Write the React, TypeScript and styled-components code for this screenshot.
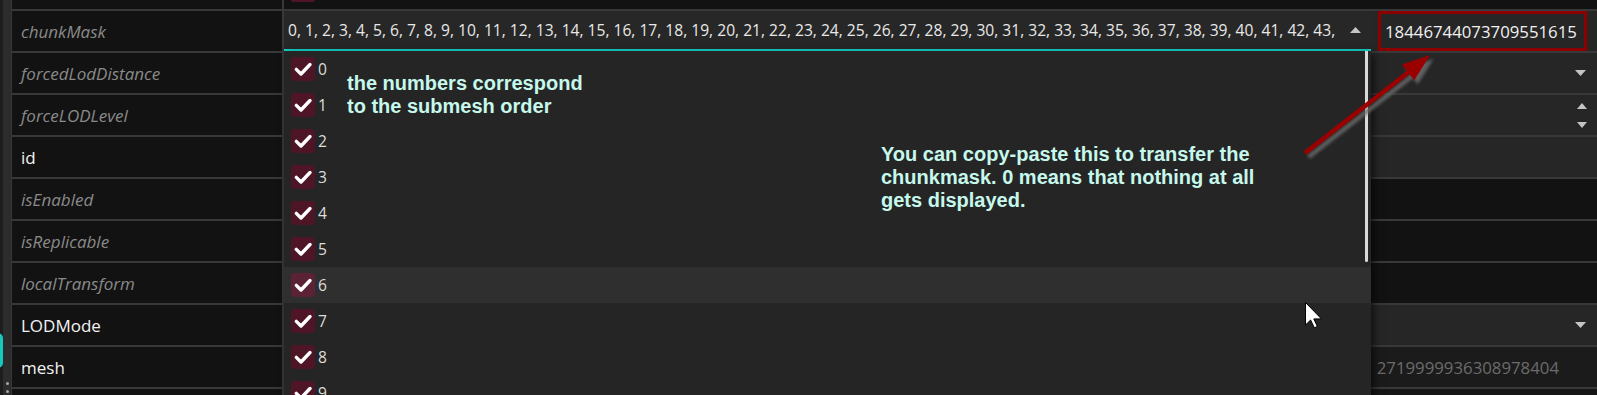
import React from "react";
import styled, { createGlobalStyle } from "styled-components";

const GlobalStyle = createGlobalStyle`
  *, *::before, *::after { box-sizing: border-box; }
  html, body { margin: 0; padding: 0; background: #121212; overflow: hidden; }
  body { font-family: "Open Sans", "Noto Sans", sans-serif; }
`;

const Page = styled.div`
  position: relative;
  display: flex;
  width: 1597px;
  height: 395px;
  overflow: hidden;
  background: #121212;
`;

const SideStrip = styled.div`
  flex: none;
  width: 12px;
  height: 100%;
  background: #2c2c2c;
  border-left: 3px solid #1d1d1d;
  border-right: 1px solid #363636;
  display: flex;
  flex-direction: column;
  justify-content: flex-end;
  align-items: flex-start;
  padding-bottom: 2px;
`;

const TabHandle = styled.div`
  flex: none;
  width: 20px;
  height: 35px;
  margin-left: -20px;
  margin-bottom: 14px;
  border: 3px solid #17c9bd;
  border-radius: 5px;
`;

const Dots = styled.div`
  display: flex;
  flex-direction: column;
  gap: 5px;
  margin-left: 3px;
`;

const Dot = styled.span`
  width: 3px;
  height: 3px;
  border-radius: 50%;
  background: #a6a6a6;
`;

const Table = styled.div`
  flex: 1;
  display: flex;
  flex-direction: column;
  gap: 2px;
  background: #383838;
`;

const Row = styled.div<{ $h: number }>`
  flex: none;
  height: ${(p) => p.$h}px;
  display: grid;
  grid-template-columns: 270px 1fr;
  column-gap: 2px;
`;

const Label = styled.div<{ $dim?: boolean }>`
  background: #121212;
  display: flex;
  align-items: center;
  padding-left: 9px;
  font-size: 17px;
  font-style: ${(p) => (p.$dim ? "italic" : "normal")};
  color: ${(p) => (p.$dim ? "#8a8a8a" : "#f2f2f2")};
  white-space: nowrap;
`;

const ValueCell = styled.div<{ $bg: string }>`
  background: ${(p) => p.$bg};
  display: flex;
  align-items: center;
  justify-content: flex-end;
  padding-right: 11px;
  overflow: hidden;
`;

const TopStub = styled.div`
  background: #121212;
  display: flex;
  align-items: flex-start;
  padding-left: 7px;
`;

const StubCheck = styled.span`
  width: 24px;
  height: 2px;
  background: #4e1527;
  border-radius: 0 0 3px 3px;
`;

const Spinner = styled.div`
  display: flex;
  flex-direction: column;
  justify-content: space-between;
  height: 25px;
  margin-right: -1px;
`;

const MeshHash = styled.span`
  font-size: 16.8px;
  color: #6b6b6b;
  padding-right: 27px;
`;

const MaskValue = styled.div`
  display: flex;
  background: #262626;
`;

const DropdownField = styled.div`
  position: relative;
  flex: none;
  width: 1087px;
  background: #272727;
  border-bottom: 2px solid #14d0c3;
  display: flex;
  align-items: center;
  padding: 0 10px 0 4px;
  gap: 8px;
`;

const FieldText = styled.div`
  flex: 1;
  overflow: hidden;
  white-space: nowrap;
  font-size: 15.6px;
  color: #e8e8e8;
`;

const Popup = styled.div`
  position: absolute;
  top: calc(100% + 2px);
  left: 0;
  width: 100%;
  height: 380px;
  background: #252525;
  box-shadow: 3px 3px 8px rgba(0, 0, 0, 0.6);
  overflow: hidden;
  z-index: 2;
`;

const ScrollThumb = styled.div`
  position: absolute;
  top: 0;
  right: 3px;
  width: 3px;
  height: 211px;
  background: #d9d9d9;
  border-radius: 0 0 1.5px 1.5px;
`;

const ItemRow = styled.div<{ $hover?: boolean }>`
  height: 36px;
  display: flex;
  align-items: center;
  gap: 3px;
  padding-left: 7px;
  background: ${(p) => (p.$hover ? "#2f2f2f" : "transparent")};
`;

const CheckBox = styled.span<{ $hover?: boolean }>`
  width: 24px;
  height: 24px;
  border-radius: 4px;
  background: ${(p) => (p.$hover ? "#5b2235" : "#4e1527")};
  display: grid;
  place-items: center;
`;

const ItemLabel = styled.span`
  font-size: 15.6px;
  color: #dcdcdc;
`;

const NumberField = styled.div`
  flex: 1;
  display: flex;
  padding: 0 10px 0 7px;
  background: #262626;
`;

const RedBox = styled.div`
  flex: 1;
  display: flex;
  align-items: center;
  padding-left: 4px;
  border: 3px solid #8e0000;
  font-size: 16.8px;
  color: #f0f0f0;
  white-space: nowrap;
`;

const Annotation = styled.div<{ $x: number; $y: number }>`
  position: absolute;
  left: ${(p) => p.$x}px;
  top: ${(p) => p.$y}px;
  font-family: "Liberation Sans", Arial, sans-serif;
  font-weight: bold;
  font-size: 20px;
  line-height: 23px;
  color: #c6f8ec;
  white-space: pre;
  z-index: 5;
`;

const ArrowSvg = styled.svg`
  position: absolute;
  left: 1295px;
  top: 45px;
  z-index: 6;
  overflow: visible;
`;

const CursorSvg = styled.svg`
  position: absolute;
  left: 1305px;
  top: 302px;
  z-index: 7;
  overflow: visible;
`;

const Tri = ({ up }: { up?: boolean }) => (
  <svg width="11" height="6" viewBox="0 0 11 6">
    <polygon points={up ? "0,6 11,6 5.5,0" : "0,0 11,0 5.5,6"} fill="#c4c4c4" />
  </svg>
);

const SmallTri = ({ up }: { up?: boolean }) => (
  <svg width="10" height="6" viewBox="0 0 10 6">
    <polygon points={up ? "0,6 10,6 5,0" : "0,0 10,0 5,6"} fill="#c4c4c4" />
  </svg>
);

const Check = () => (
  <svg width="24" height="24" viewBox="0 0 24 24">
    <path d="M5.3 12.4 L10 17 L19 7.5" fill="none" stroke="#ffffff" strokeWidth="3.4" strokeLinecap="round" strokeLinejoin="round" />
  </svg>
);

const maskText = Array.from({ length: 44 }, (_, i) => `${i},`).join(" ");

type RowDef = {
  label: string;
  dim?: boolean;
  bg: string;
  control?: "down" | "spin" | "hash";
};

const rows: RowDef[] = [
  { label: "forcedLodDistance", dim: true, bg: "#262626", control: "down" },
  { label: "forceLODLevel", dim: true, bg: "#262626", control: "spin" },
  { label: "id", bg: "#262626" },
  { label: "isEnabled", dim: true, bg: "#121212" },
  { label: "isReplicable", dim: true, bg: "#121212" },
  { label: "localTransform", dim: true, bg: "#121212" },
  { label: "LODMode", bg: "#262626", control: "down" },
  { label: "mesh", bg: "#1b1b1b", control: "hash" },
];

export default function App() {
  return (
    <>
      <GlobalStyle />
      <Page>
        <SideStrip>
          <TabHandle />
          <Dots>
            <Dot />
            <Dot />
          </Dots>
        </SideStrip>
        <Table>
          <Row $h={9}>
            <Label />
            <TopStub>
              <StubCheck />
            </TopStub>
          </Row>
          <Row $h={40}>
            <Label $dim>chunkMask</Label>
            <MaskValue>
              <DropdownField>
                <FieldText>{maskText}</FieldText>
                <Tri up />
                <Popup>
                  {Array.from({ length: 10 }, (_, i) => (
                    <ItemRow key={i} $hover={i === 6}>
                      <CheckBox $hover={i === 6}>
                        <Check />
                      </CheckBox>
                      <ItemLabel>{i}</ItemLabel>
                    </ItemRow>
                  ))}
                  <ScrollThumb />
                </Popup>
              </DropdownField>
              <NumberField>
                <RedBox>18446744073709551615</RedBox>
              </NumberField>
            </MaskValue>
          </Row>
          {rows.map((r) => (
            <Row $h={40} key={r.label}>
              <Label $dim={r.dim}>{r.label}</Label>
              <ValueCell $bg={r.bg}>
                {r.control === "down" && <Tri />}
                {r.control === "spin" && (
                  <Spinner>
                    <SmallTri up />
                    <SmallTri />
                  </Spinner>
                )}
                {r.control === "hash" && <MeshHash>2719999936308978404</MeshHash>}
              </ValueCell>
            </Row>
          ))}
          <Row $h={40}>
            <Label />
            <ValueCell $bg="#161616" />
          </Row>
        </Table>

        <Annotation $x={347} $y={72}>{"the numbers correspond\nto the submesh order"}</Annotation>
        <Annotation $x={881} $y={143}>
          {"You can copy-paste this to transfer the\nchunkmask. 0 means that nothing at all\ngets displayed."}
        </Annotation>

        <ArrowSvg width="150" height="125" viewBox="0 0 150 125">
          <defs>
            <filter id="arrowShadow" x="-20%" y="-20%" width="140%" height="140%">
              <feGaussianBlur stdDeviation="1.6" />
            </filter>
          </defs>
          <g transform="translate(3.5,4)" filter="url(#arrowShadow)" opacity="0.85">
            <line x1="10" y1="108" x2="115" y2="26" stroke="#6a6a6a" strokeWidth="4.5" />
            <polygon points="135,10 119.2,35.2 106.8,19.4" fill="#6a6a6a" />
          </g>
          <line x1="10" y1="108" x2="115" y2="26" stroke="#9b0000" strokeWidth="4.5" />
          <polygon points="135,10 119.2,35.2 106.8,19.4" fill="#9b0000" />
        </ArrowSvg>

        <CursorSvg width="18" height="27" viewBox="0 0 18 27">
          <path
            d="M0.5 0.5 L0.5 23 L5.6 18 L9.3 25.8 L12.4 24.4 L8.8 16.9 L16.5 16.9 Z"
            fill="#ffffff"
            stroke="#000000"
            strokeWidth="1"
            strokeLinejoin="miter"
          />
        </CursorSvg>
      </Page>
    </>
  );
}
